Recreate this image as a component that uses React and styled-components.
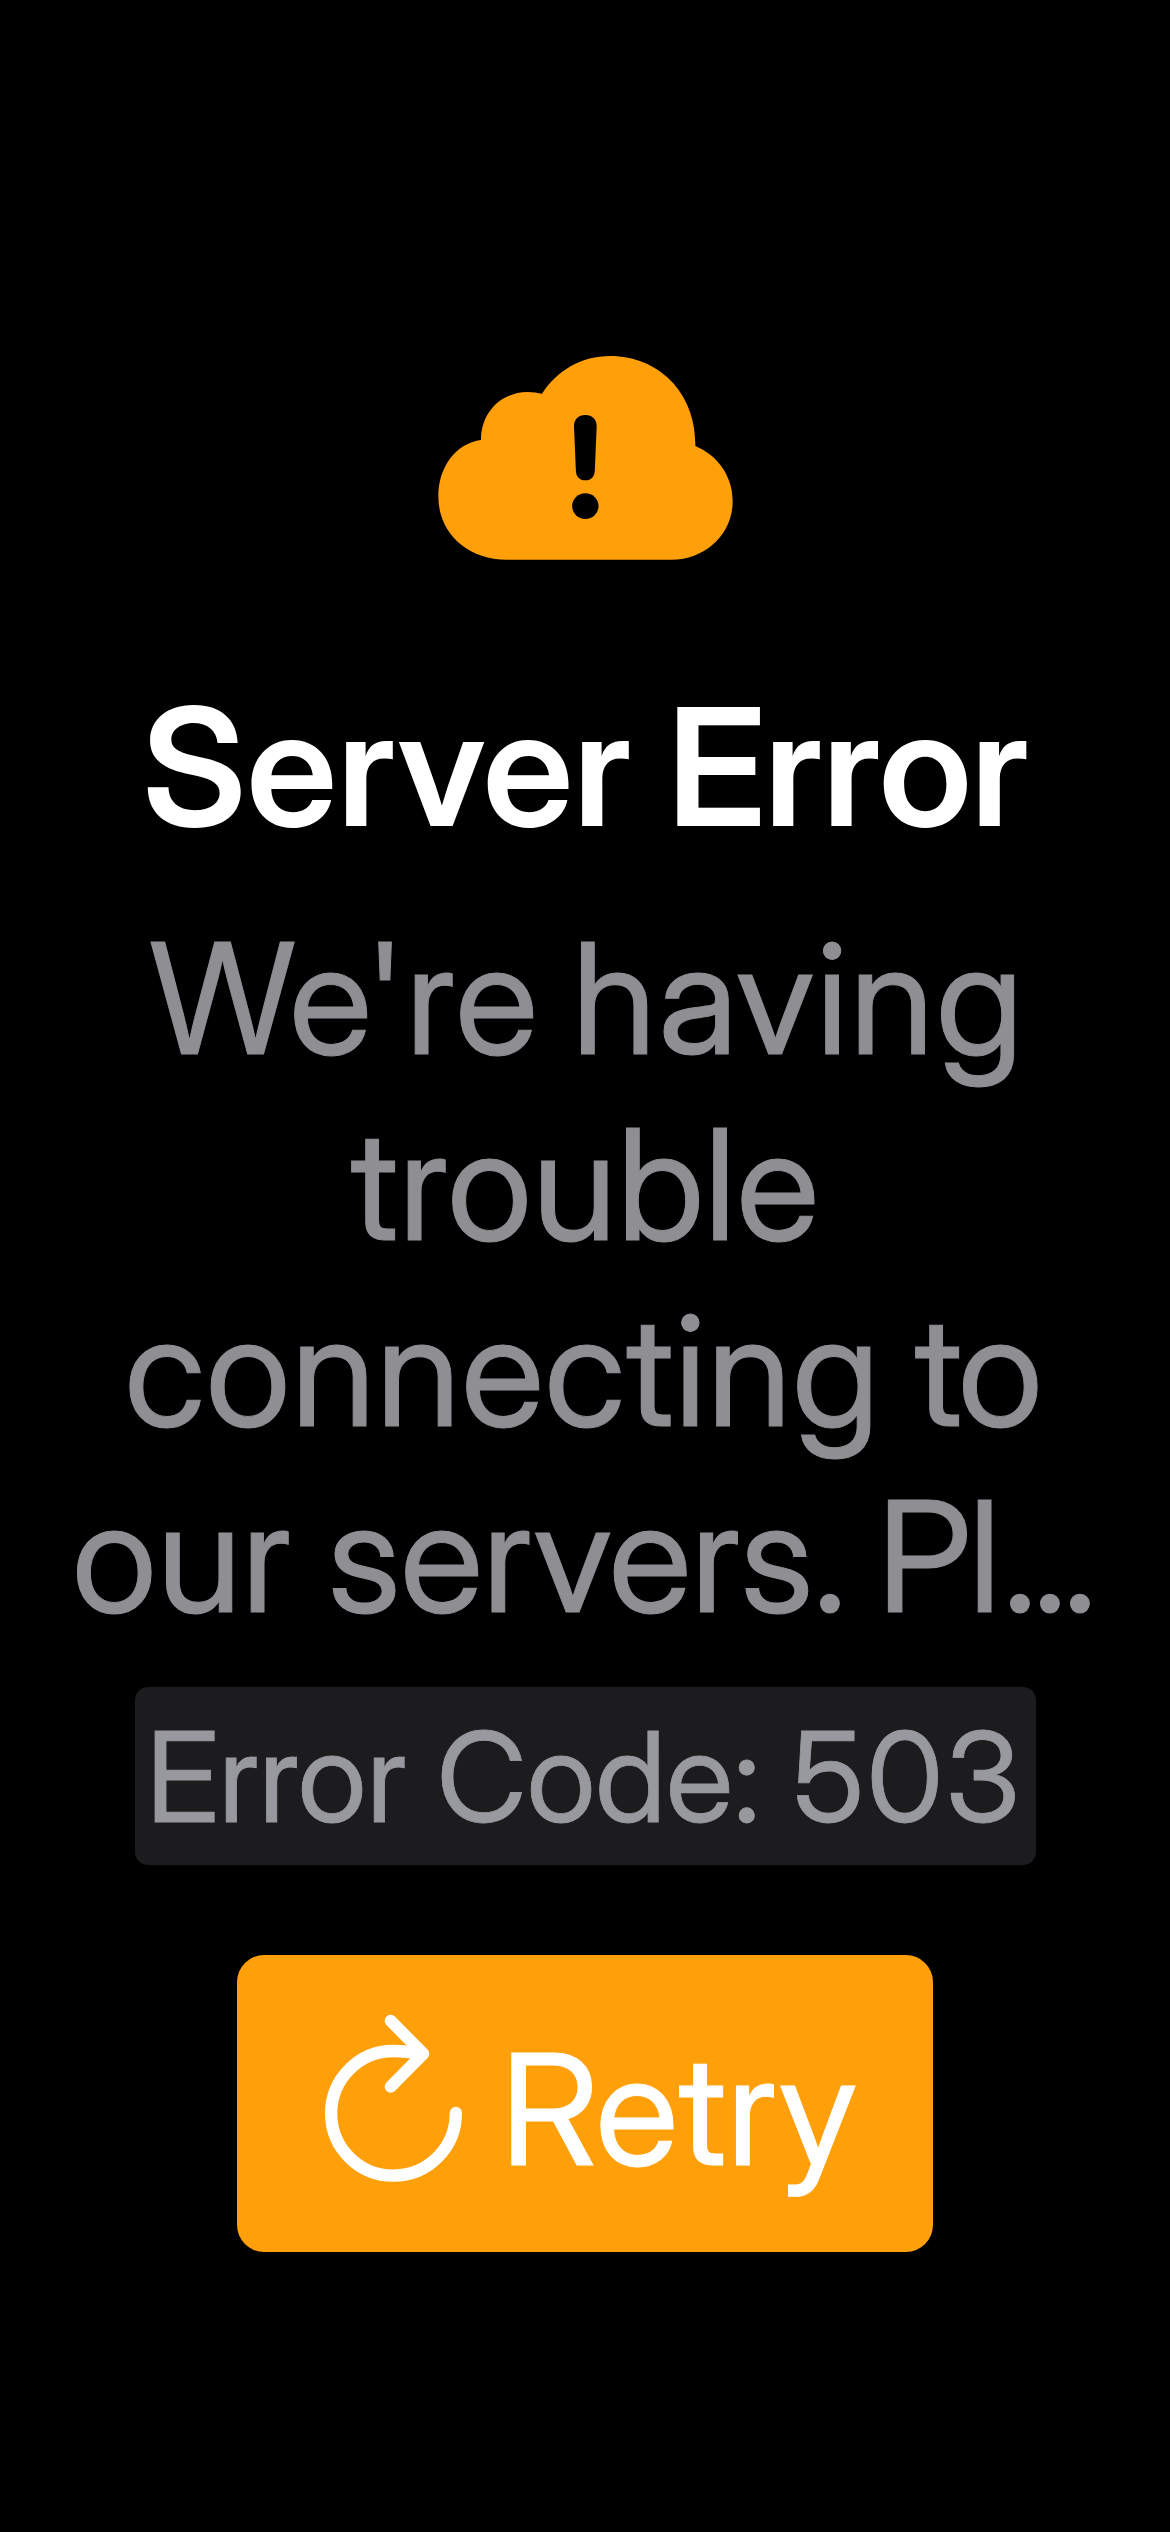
import React from "react";
import styled, { createGlobalStyle } from "styled-components";

const GlobalStyle = createGlobalStyle`
  html, body {
    margin: 0;
    background: #000;
  }
  body {
    font-family: "Inter Display", Inter, "Liberation Sans", sans-serif;
  }
`;

const Screen = styled.main`
  box-sizing: border-box;
  width: 1170px;
  height: 2532px;
  padding-top: 356px;
  display: flex;
  flex-direction: column;
  align-items: center;
  overflow: hidden;
  background: #000;
`;

const CloudGlyph = styled.svg`
  display: block;
  flex: none;
  width: 295px;
  height: 204px;
`;

const Title = styled.h1`
  margin: 107px 0 0;
  font-size: 163.3px;
  font-weight: 600;
  line-height: 200px;
  white-space: nowrap;
  color: #fff;
`;

const Message = styled.p`
  width: 100%;
  margin: 38px 0 0;
  font-size: 154px;
  line-height: 186px;
  text-align: center;
  white-space: nowrap;
  color: #8e8e93;
  -webkit-text-stroke: 1px #8e8e93;
`;

const Line = styled.span`
  display: block;
  margin-left: ${(p) => p.$shift || 0}px;
`;

const Word = styled.span`
  letter-spacing: ${(p) => p.$track || 0}px;
  margin-left: ${(p) => p.$gap || 0}px;
`;

const CodeBadge = styled.div`
  box-sizing: border-box;
  width: 901px;
  height: 178px;
  margin-top: 38px;
  padding-left: 11.5px;
  border-radius: 13px;
  background: #1c1c1e;
  font-size: 125px;
  line-height: 179px;
  white-space: nowrap;
  color: #98989f;
  -webkit-text-stroke: 0.8px #98989f;
`;

const RetryButton = styled.button`
  box-sizing: border-box;
  width: 696px;
  height: 297px;
  margin-top: 90px;
  padding: 55px 0 0 83px;
  border: 0;
  border-radius: 27px;
  display: flex;
  align-items: flex-start;
  gap: 34px;
  background: #ff9f0a;
  color: #fff;
  font-family: inherit;
  font-size: 154px;
  line-height: 186px;
  text-align: left;
`;

const RefreshGlyph = styled.svg`
  display: block;
  flex: none;
  width: 146.67px;
  height: 176.67px;
`;

const RetryLabel = styled.span`
  margin-top: 6px;
  letter-spacing: 0.5px;
  -webkit-text-stroke: 1px #fff;
`;

function CloudAlert() {
  return (
    <CloudGlyph viewBox="54 48 885 612" aria-hidden="true">
      <path
        fill="#ff9f0a"
        d="M260 659C140 659 55 577 55 470C55 380 108 310 183 300C183 216 245 156 323 156Q346 156 366 161C412 91 484 48 571 48C715 48 829 158 826 318C893 346 938 408 938 484C938 582 857 659 755 659Z"
      />
      <path
        fill="#000"
        d="M496 225C517 225 530 238 530 259L524.500 390C524 410 514 421 496 421C478 421 468 410 467.500 390L462 259C462 238 475 225 496 225Z"
      />
      <rect fill="#000" x="456.500" y="460" width="79" height="77" rx="39.500" ry="38.500" />
    </CloudGlyph>
  );
}

function Refresh() {
  return (
    <RefreshGlyph viewBox="300 210 440 530" fill="none" stroke="#fff" strokeLinecap="round" strokeLinejoin="round" aria-hidden="true">
      <path strokeWidth="37" d="M707.500 519A187 187 0 1 1 520.500 333Q560 333 606 343" />
      <path strokeWidth="36" d="M512 242.500L610 341.500L512 440" />
    </RefreshGlyph>
  );
}

export default function App() {
  return (
    <>
      <GlobalStyle />
      <Screen>
        <CloudAlert />
        <Title>
          <Word $track={0.2}>Server</Word> <Word $track={-0.9} $gap={-1.1}>Error</Word>
        </Title>
        <Message>
          <Line $shift={4.4}>
            <Word $track={1.25}>We're</Word> <Word $track={1.8} $gap={-5.6}>having</Word>
          </Line>
          <Line>
            <Word $track={0.4}>trouble</Word>
          </Line>
          <Line $shift={-6}>
            <Word $track={0.8}>connecting</Word> <Word $track={-3} $gap={-4}>to</Word>
          </Line>
          <Line $shift={-5}>
            <Word $track={0.5}>our</Word> <Word $track={-0.3} $gap={-2.8}>servers.</Word>{" "}
            <Word $track={-2.5} $gap={-8}>P</Word>
            <Word $track={2.3}>l</Word>
            <Word $track={-3.8}>...</Word>
          </Line>
        </Message>
        <CodeBadge>
          <Word>Error</Word> <Word $gap={-1.5}>Code:</Word> <Word $track={2} $gap={0.8}>503</Word>
        </CodeBadge>
        <RetryButton type="button">
          <Refresh />
          <RetryLabel>Retry</RetryLabel>
        </RetryButton>
      </Screen>
    </>
  );
}
